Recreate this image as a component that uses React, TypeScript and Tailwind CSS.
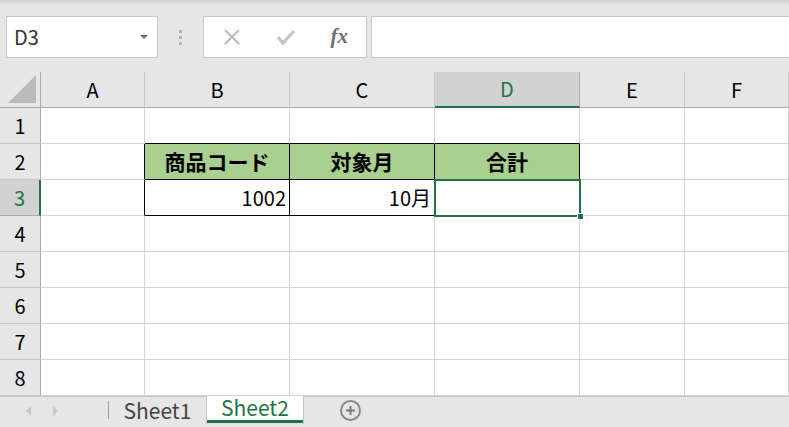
const FONT = { fontFamily: '"Noto Sans CJK JP", "Noto Sans", sans-serif' };

const cols = ["A", "B", "C", "D", "E", "F"];

type CellProps = {
    children?: React.ReactNode;
    className?: string;
};

const Cell = ({ children, className = "" }: CellProps) => (
    <div className={`flex items-center px-[3px] text-[20px] text-black ${className}`}>{children}</div>
);

const App = () => {
    const grid = "border-r border-b border-[#d4d4d4]";
    return (
        <div className="w-[789px] h-[427px] overflow-hidden bg-[#e6e6e6] select-none" style={FONT}>
            {/* formula bar */}
            <div className="h-[72px] flex flex-col">
                <div className="h-[5px] bg-gradient-to-b from-[#d0d0d0] to-[#e6e6e6]" />
                <div className="flex items-start pt-[11px] pl-[6px] gap-0">
                    <div className="w-[152px] h-[42px] bg-white border border-[#c6c6c6] flex items-center justify-between pl-[7px] pr-[9px]">
                        <span className="text-[20px] text-[#333]">D3</span>
                        <span className="w-0 h-0 border-l-[4px] border-r-[4px] border-t-[4px] border-l-transparent border-r-transparent border-t-[#707070]" />
                    </div>
                    <div className="w-[45px] h-[42px] flex flex-col items-center justify-center gap-[3px]">
                        <span className="w-[3px] h-[3px] bg-[#b4b4b4]" />
                        <span className="w-[3px] h-[3px] bg-[#b4b4b4]" />
                        <span className="w-[3px] h-[3px] bg-[#b4b4b4]" />
                    </div>
                    <div className="w-[164px] h-[42px] bg-white border border-[#c6c6c6] flex items-center justify-between pl-[19px] pr-[18px]">
                        <svg width="18" height="18" viewBox="0 0 18 18">
                            <path d="M2 2 L16 16 M16 2 L2 16" stroke="#bcbcbc" strokeWidth="2.2" />
                        </svg>
                        <svg width="20" height="18" viewBox="0 0 20 18">
                            <path d="M2 9 L7 15 L18 3" stroke="#c4c4c4" strokeWidth="3.2" fill="none" />
                        </svg>
                        <span className="text-[21px] italic font-bold text-[#6e6e6e]" style={{ fontFamily: '"Liberation Serif", serif' }}>
                            fx
                        </span>
                    </div>
                    <div className="ml-[4px] flex-1 h-[42px] bg-white border-y border-l border-[#c6c6c6]" />
                </div>
            </div>

            {/* sheet grid */}
            <div className="relative grid grid-cols-[41px_104px_145px_145px_145px_105px_104px] grid-rows-[36px_repeat(8,36px)] bg-white">
                <div className="bg-[#e6e6e6] border-r border-b border-[#ababab] relative flex items-end justify-end pr-[4px] pb-[4px]">
                    <span className="w-0 h-0 border-b-[28px] border-l-[28px] border-b-[#bababa] border-l-transparent" />
                </div>
                {cols.map((c) => (
                    <div
                        key={c}
                        className={`flex items-center justify-center text-[20px] border-b ${
                            c === "D"
                                ? "bg-[#d2d2d2] text-[#217346] border-b-2 border-b-[#217346] border-r border-r-[#ababab]"
                                : "bg-[#e6e6e6] text-black border-b-[#ababab] border-r border-r-[#c8c8c8]"
                        }`}
                    >
                        {c}
                    </div>
                ))}

                {[1, 2, 3, 4, 5, 6, 7, 8].map((r) => (
                    <RowCells key={r} r={r} grid={grid} />
                ))}

                {/* selection of D3 */}
                <div className="absolute left-[434px] top-[107px] w-[147px] h-[38px] border-2 border-[#217346] pointer-events-none" />
                <div className="absolute left-[577px] top-[141px] w-[7px] h-[7px] bg-[#217346] border border-white" />
            </div>

            {/* sheet tabs */}
            <div className="h-[31px] flex items-start border-t border-[#c6c6c6] bg-[#e6e6e6]">
                <div className="w-[108px] h-[27px] flex items-center pl-[26px] gap-[22px]">
                    <span className="w-0 h-0 border-y-[5px] border-r-[5px] border-y-transparent border-r-[#c8c8c8]" />
                    <span className="w-0 h-0 border-y-[5px] border-l-[5px] border-y-transparent border-l-[#c8c8c8]" />
                </div>
                <div className="w-px h-[18px] mt-[4px] bg-[#9a9a9a]" />
                <div className="w-[98px] h-[27px] flex items-center justify-center text-[21px] text-[#444] border-r border-[#c6c6c6]">
                    Sheet1
                </div>
                <div className="w-[96px] h-[27px] -mt-px bg-white flex items-center justify-center text-[21px] text-[#217346] border-b-[3px] border-[#217346]">
                    Sheet2
                </div>
                <div className="w-px h-[27px] bg-[#c6c6c6]" />
                <div className="ml-[36px] mt-[3px] w-[21px] h-[21px] rounded-full border-2 border-[#8a8a8a] flex items-center justify-center">
                    <svg width="11" height="11" viewBox="0 0 11 11">
                        <path d="M5.5 1 V10 M1 5.5 H10" stroke="#7a7a7a" strokeWidth="2" />
                    </svg>
                </div>
            </div>
        </div>
    );
};

const RowCells = ({ r, grid }: { r: number; grid: string }) => {
    const sel = r === 3;
    const header = (
        <div
            className={`flex items-center justify-center text-[20px] border-b ${
                sel
                    ? "bg-[#d2d2d2] text-[#217346] border-r-2 border-r-[#217346] border-b-[#ababab]"
                    : "bg-[#e6e6e6] text-black border-r border-r-[#ababab] border-b-[#c8c8c8]"
            }`}
        >
            {r}
        </div>
    );
    const inTable = r === 2 || r === 3;
    const aCls = inTable ? "border-r border-r-black border-b border-b-[#d4d4d4]" : grid;
    const boxed = "border-r border-b border-black";
    const top = r === 1 ? "border-r border-r-[#d4d4d4] border-b border-b-black" : grid;

    let b: React.ReactNode = <Cell className={top} />;
    let c: React.ReactNode = <Cell className={top} />;
    let d: React.ReactNode = <Cell className={top} />;
    if (r === 2) {
        b = <Cell className={`${boxed} bg-[#a9d08e] justify-center font-bold text-[21px]`}>商品コード</Cell>;
        c = <Cell className={`${boxed} bg-[#a9d08e] justify-center font-bold text-[21px]`}>対象月</Cell>;
        d = <Cell className={`${boxed} bg-[#a9d08e] justify-center font-bold text-[21px]`}>合計</Cell>;
    } else if (r === 3) {
        b = <Cell className={`${boxed} justify-end`}>1002</Cell>;
        c = <Cell className={`${boxed} justify-end`}>10月</Cell>;
        d = <Cell className={boxed} />;
    }
    return (
        <>
            {header}
            <Cell className={aCls} />
            {b}
            {c}
            {d}
            <Cell className={grid} />
            <Cell className={grid} />
        </>
    );
};

export default App;
